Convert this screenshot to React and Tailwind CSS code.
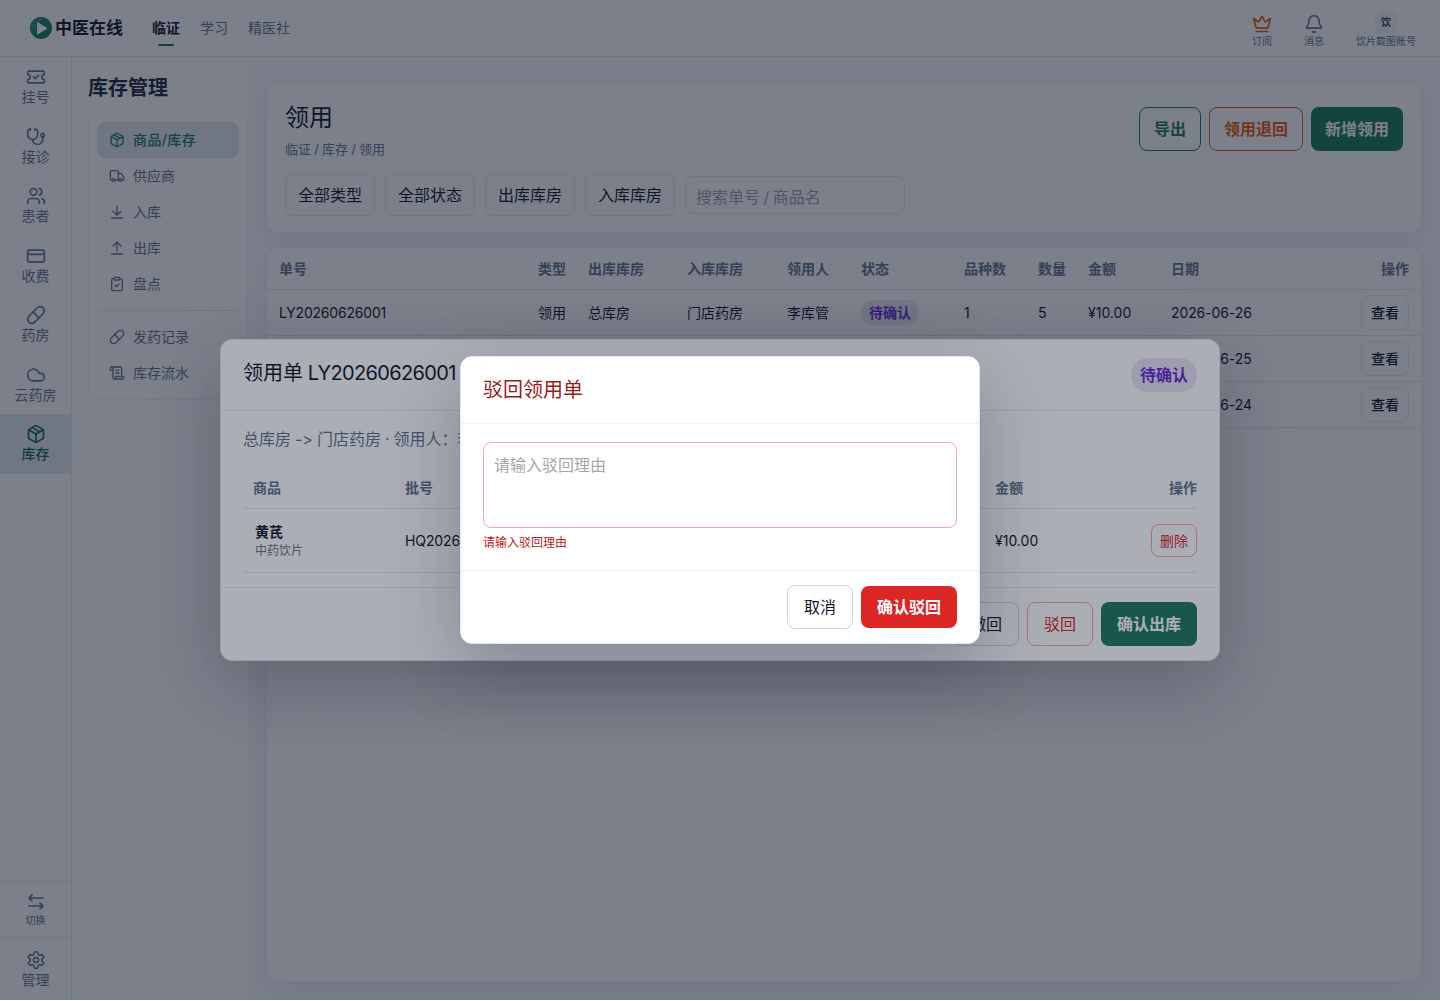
import {
  Bell,
  ClipboardCheck,
  Cloud,
  CreditCard,
  Crown,
  Package,
  Pill,
  ScrollText,
  Settings,
  Stethoscope,
  TicketCheck,
  Truck,
  Users,
} from "lucide-react";
import { clsx } from "clsx";

const railItems = [
  { label: "挂号", icon: TicketCheck },
  { label: "接诊", icon: Stethoscope },
  { label: "患者", icon: Users },
  { label: "收费", icon: CreditCard },
  { label: "药房", icon: Pill },
  { label: "云药房", icon: Cloud },
  { label: "库存", icon: Package, active: true },
];

const stockMenu = [
  { label: "商品/库存", icon: Package, active: true },
  { label: "供应商", icon: Truck },
  { label: "入库", icon: ArrowDownIcon },
  { label: "出库", icon: ArrowUpIcon },
  { label: "盘点", icon: ClipboardCheck },
];

const recordMenu = [
  { label: "发药记录", icon: Pill },
  { label: "库存流水", icon: ScrollText },
];

const filters = ["全部类型", "全部状态", "出库库房", "入库库房"];

const columns = [
  { label: "单号", width: "w-[259px]" },
  { label: "类型", width: "w-[50px]" },
  { label: "出库库房", width: "w-[99px]" },
  { label: "入库库房", width: "w-[100px]" },
  { label: "领用人", width: "w-[74px]" },
  { label: "状态", width: "w-[103px]" },
  { label: "品种数", width: "w-[74px]" },
  { label: "数量", width: "w-[50px]" },
  { label: "金额", width: "w-[83px]" },
  { label: "日期", width: "w-[140px]" },
];

const rows = [
  ["LY20260626001", "领用", "总库房", "门店药房", "李库管", "待确认", "1", "5", "¥10.00", "2026-06-26"],
  ["", "", "", "", "", "", "", "", "", "2026-06-25"],
  ["", "", "", "", "", "", "", "", "", "2026-06-24"],
];

function ArrowDownIcon(props) {
  return (
    <svg viewBox="0 0 24 24" fill="none" stroke="currentColor" strokeLinecap="round" strokeLinejoin="round" {...props}>
      <path d="M12 3v13M6 11l6 6 6-6M4 21h16" />
    </svg>
  );
}

function ArrowUpIcon(props) {
  return (
    <svg viewBox="0 0 24 24" fill="none" stroke="currentColor" strokeLinecap="round" strokeLinejoin="round" {...props}>
      <path d="M12 17V3M6 9l6-6 6 6M4 21h16" />
    </svg>
  );
}

const SwitchIcon = () => (
  <svg viewBox="0 0 20 20" className="size-5" fill="none" stroke="currentColor" strokeWidth="1.7" strokeLinecap="round" strokeLinejoin="round">
    <path d="M17 6H3M6 3 3 6l3 3M3 14h14M14 11l3 3-3 3" />
  </svg>
);

const Logo = () => (
  <svg viewBox="0 0 22 22" className="size-[22px]">
    <circle cx="11" cy="11" r="11" fill="#207a60" />
    <path
      d="M2 13a9 9 0 0 1 11-10.5M3.7 13a7.4 7.4 0 0 1 8-8.6M5.2 13a6 6 0 0 1 4-7"
      fill="none"
      stroke="#8cc7b3"
      strokeWidth="0.8"
      strokeDasharray="1 0.8"
    />
    <path d="M7 5.5v11.5q0 .8.8.4l9-5.4q.8-.6 0-1.2l-9-5.5q-.8-.4-.8.2z" fill="#fff" />
  </svg>
);

const Header = () => (
  <header className="flex h-[57px] shrink-0 items-center border-b border-slate-200 bg-white pl-[30px] pr-6">
    <div className="flex items-center gap-[3px]">
      <Logo />
      <span className="text-[17px] font-semibold leading-6 text-slate-900">中医在线</span>
    </div>
    <nav className="ml-[29px] flex gap-5 text-sm text-slate-500">
      <span className="relative font-bold text-slate-900">
        临证
        <i className="absolute -bottom-2 left-1.5 h-0.5 w-4 rounded-full bg-[#1b7a5a]" />
      </span>
      <span>学习</span>
      <span>精医社</span>
    </nav>
    <div className="ml-auto flex h-full pt-2.5 text-[10px] leading-[14px] text-slate-500">
      <div className="flex w-5 flex-col items-center whitespace-nowrap pt-1">
        <Crown className="size-5 text-[#ea580c]" strokeWidth={2} />
        订阅
      </div>
      <div className="ml-8 flex w-5 flex-col items-center whitespace-nowrap pt-1">
        <Bell className="size-5" strokeWidth={2} />
        消息
      </div>
      <div className="ml-8 flex flex-col items-center">
        <span className="flex size-6 items-center justify-center rounded-full bg-slate-100 font-bold text-slate-700">
          饮
        </span>
        饮片截图账号
      </div>
    </div>
  </header>
);

const Rail = () => (
  <aside className="flex w-[72px] shrink-0 flex-col border-r border-slate-200 bg-white text-sm text-slate-500">
    {railItems.map(({ label, icon: Icon, active }) => (
      <div
        key={label}
        className={clsx(
          "flex h-[59.5px] flex-col items-center pt-2.5 leading-5",
          active && "bg-[#e3ebed] font-medium text-[#0f6b50]"
        )}
      >
        <Icon className="size-5" strokeWidth={2} />
        {label}
      </div>
    ))}
    <div className="mt-auto flex h-14 flex-col items-center border-t border-slate-200 pt-2.5 text-[10px] leading-4">
      <SwitchIcon />
      切换
    </div>
    <div className="flex h-[63px] flex-col items-center border-t border-slate-200 pt-3 leading-5">
      <Settings className="size-5" strokeWidth={2} />
      管理
    </div>
  </aside>
);

const MenuItem = ({ label, icon: Icon, active }) => (
  <div
    className={clsx(
      "flex h-9 items-center gap-2 rounded-lg px-3",
      active && "bg-[#e3ebed] font-medium tracking-[0.4px] text-[#1b7a5a]"
    )}
  >
    <Icon className="size-4" strokeWidth={2} />
    {label}
  </div>
);

const SubNav = () => (
  <aside className="w-44 shrink-0 bg-white pl-4 pt-[17px]">
    <h2 className="text-xl font-bold leading-7 text-slate-800">库存管理</h2>
    <div className="mt-[11px] rounded-xl border border-slate-200/60 p-2 text-sm text-slate-500">
      {stockMenu.map((item) => (
        <MenuItem key={item.label} {...item} />
      ))}
      <div className="my-2 border-t border-slate-200" />
      {recordMenu.map((item) => (
        <MenuItem key={item.label} {...item} />
      ))}
    </div>
  </aside>
);

const Toolbar = () => (
  <section className="h-[151px] rounded-xl border border-slate-200/70 bg-white px-[18px] pt-[17px] shadow-[0_8px_24px_rgba(15,23,42,0.06)]">
    <div className="flex justify-between">
      <div>
        <h1 className="text-2xl leading-9 text-slate-900">领用</h1>
        <p className="mt-[3px] text-[13px] leading-5 text-slate-500 [word-spacing:-0.5px]">临证 / 库存 / 领用</p>
      </div>
      <div className="mt-[7px] flex gap-2 font-bold">
        <button className="h-11 rounded-lg border border-[#1b7a5a] px-3.5 text-[#1b7a5a]">导出</button>
        <button className="h-11 rounded-lg border border-[#ea580c] px-3.5 text-[#ea580c]">领用退回</button>
        <button className="h-11 rounded-lg bg-[#1b7a5a] px-3.5 text-white">新增领用</button>
      </div>
    </div>
    <div className="mt-[15px] flex items-center gap-2.5 text-slate-900">
      {filters.map((f) => (
        <button key={f} className="h-[42px] rounded-lg border border-slate-200 px-3">
          {f}
        </button>
      ))}
      <input
        className="h-[38px] w-[220px] rounded-lg border border-slate-200 px-2.5 pt-1 [word-spacing:-1px] placeholder:text-[#9ca3af]"
        placeholder="搜索单号 / 商品名"
      />
    </div>
  </section>
);

const OrderTable = () => (
  <section className="mt-3.5 h-[735px] overflow-hidden rounded-xl border border-slate-200/70 bg-white shadow-[0_8px_24px_rgba(15,23,42,0.06)]">
    <table className="w-full table-fixed text-left text-sm text-slate-900">
      <thead>
        <tr className="h-[41px] border-b border-slate-200 text-slate-500">
          {columns.map((c) => (
            <th key={c.label} className={clsx("whitespace-nowrap pl-3 pt-0.5 font-semibold", c.width)}>
              {c.label}
            </th>
          ))}
          <th className="pr-3 pt-0.5 text-right font-semibold">操作</th>
        </tr>
      </thead>
      <tbody>
        {rows.map((row, i) => (
          <tr key={i} className="h-[46px] border-b border-slate-200">
            {row.map((cell, j) => (
              <td
                key={j}
                className={clsx(
                  "whitespace-nowrap pl-3 pt-px",
                  j === 0 && "tracking-[-0.2px]",
                  j === 9 && "tracking-[-0.1px]"
                )}
              >
                {j === 5 && cell ? (
                  <span className="inline-block rounded-full bg-[#e8e8f1] px-2 py-0.5 font-semibold leading-[21px] text-[#6d28d9]">
                    {cell}
                  </span>
                ) : (
                  cell
                )}
              </td>
            ))}
            <td className="pr-3 text-right">
              <button className="h-[35px] rounded-lg border border-slate-200 px-[9px] pt-0.5 font-medium">查看</button>
            </td>
          </tr>
        ))}
      </tbody>
    </table>
  </section>
);

const DetailModal = () => (
  <div className="absolute inset-0 flex items-center justify-center bg-[#0f172a]/30">
    <div className="h-[322px] w-[1000px] rounded-xl border border-slate-200 bg-white shadow-[0_24px_72px_rgba(15,23,42,0.26)]">
      <div className="flex h-[71px] items-start justify-between border-b border-[#e9edf2] px-[22px] pt-[18px]">
        <h3 className="text-xl leading-[30px] text-slate-900">
          领用单 <span className="-ml-px tracking-[-0.65px]">LY20260626001</span>
        </h3>
        <span className="flex h-[34px] items-center rounded-full bg-[#ebe5f5] px-[9px] font-semibold text-[#6d28d9]">
          待确认
        </span>
      </div>
      <div className="h-[177px] border-b border-[#e9edf2] px-[22px] pt-4">
        <p className="leading-6 text-slate-500 [font-feature-settings:'calt'_0] [word-spacing:-0.5px]">
          总库房 -&gt; 门店药房 · 领用人：李库管
        </p>
        <table className="mt-[17px] w-full table-fixed text-left text-sm text-slate-900">
          <thead>
            <tr className="h-10 border-b border-slate-200 text-slate-500">
              <th className="w-[152px] pl-2.5 font-semibold">商品</th>
              <th className="w-[590px] pl-2.5 font-semibold">批号</th>
              <th className="pl-2.5 font-semibold">金额</th>
              <th className="text-right font-semibold">操作</th>
            </tr>
          </thead>
          <tbody>
            <tr className="h-16 border-b border-slate-200">
              <td className="pl-3 pt-0.5">
                <div className="font-bold leading-5">黄芪</div>
                <div className="text-xs leading-[18px] text-slate-500">中药饮片</div>
              </td>
              <td className="pl-2.5 pt-px tracking-[-0.1px]">HQ202601</td>
              <td className="pl-2.5 pt-px">¥10.00</td>
              <td className="text-right">
                <button className="h-[33px] rounded-lg border border-[#f8a5a5] px-2 pt-0.5 text-[#dc2626]">删除</button>
              </td>
            </tr>
          </tbody>
        </table>
      </div>
      <div className="flex justify-end gap-2 px-[22px] pt-[14px]">
        <button className="h-11 rounded-lg border border-[#d1d5db] px-4 text-slate-900">撤回</button>
        <button className="h-11 rounded-lg border border-[#f8a5a5] px-4 text-[#dc2626]">驳回</button>
        <button className="h-11 rounded-lg bg-[#207a60] px-4 font-bold text-white">确认出库</button>
      </div>
    </div>
  </div>
);

const RejectModal = () => (
  <div className="absolute inset-0 flex items-center justify-center bg-[#0f172a]/35">
    <div className="h-[288px] w-[520px] rounded-xl border border-slate-200 bg-white shadow-[0_24px_72px_rgba(15,23,42,0.26)]">
      <div className="h-[67px] border-b border-[#edeff3] px-[22px] pt-[18px]">
        <h3 className="text-xl leading-[30px] text-[#991b1b]">驳回领用单</h3>
      </div>
      <div className="h-[147px] border-b border-[#edeff3] px-[22px] pt-[18px]">
        <textarea
          className="block h-[86px] w-full resize-none rounded-lg border border-[#f8a5a5] px-2.5 py-2.5 placeholder:text-[#a3a5ab]"
          placeholder="请输入驳回理由"
        />
        <p className="mt-1.5 text-xs leading-[18px] text-[#b91c1c]">请输入驳回理由</p>
      </div>
      <div className="flex items-center justify-end gap-2 px-[22px] pt-3.5">
        <button className="h-11 rounded-lg border border-[#d1d5db] px-4 text-slate-900">取消</button>
        <button className="h-[42px] rounded-lg bg-[#dc2626] px-4 font-bold text-white">确认驳回</button>
      </div>
    </div>
  </div>
);

export default function App() {
  return (
    <div className="relative flex h-[1000px] flex-col overflow-hidden bg-white font-['Inter','Noto_Sans_CJK_SC',sans-serif]">
      <Header />
      <div className="flex flex-1">
        <Rail />
        <SubNav />
        <main className="mt-[7px] flex-1 bg-[#f8fafc] px-[18px] pt-[18px]">
          <Toolbar />
          <OrderTable />
        </main>
      </div>
      <DetailModal />
      <RejectModal />
    </div>
  );
}
